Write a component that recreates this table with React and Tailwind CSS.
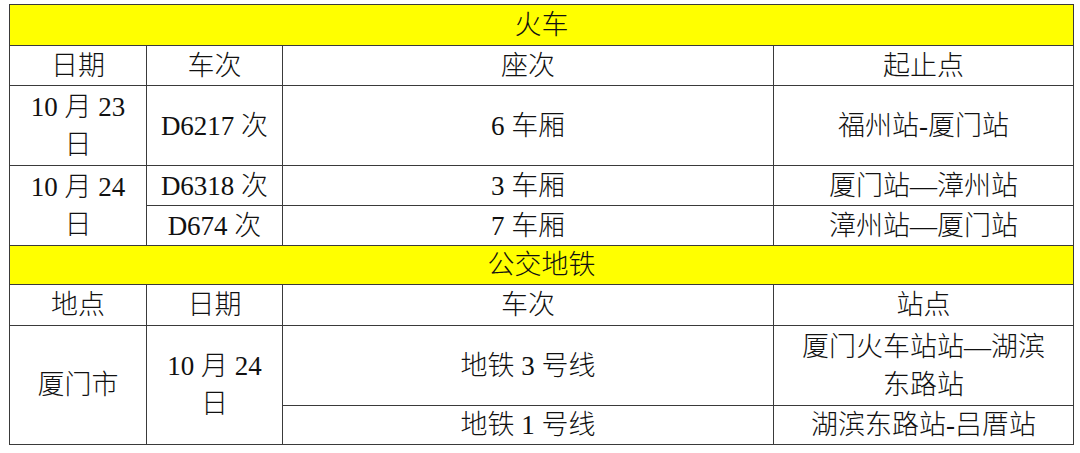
import React from "react";

const font = { fontFamily: '"Liberation Serif", "Noto Sans CJK SC", serif' };

function Td({ children, className = "", ...rest }) {
  return (
    <td
      className={`border border-[#3a3a3a] px-[7px] text-center align-middle leading-[38px] ${className}`}
      {...rest}
    >
      {children}
    </td>
  );
}

export default function App() {
  return (
    <div className="w-[1080px] h-[453px] bg-white pl-[9px] pt-[4px]" style={font}>
      <table className="w-[1064px] table-fixed border-collapse border border-[#7a7a7a] text-[27px] font-light text-[#111]">
        <colgroup>
          <col className="w-[137px]" />
          <col className="w-[136px]" />
          <col className="w-[491px]" />
          <col className="w-[300px]" />
        </colgroup>
        <tbody>
          <tr className="h-[41px]">
            <Td colSpan={4} className="bg-[#ffff00]">火车</Td>
          </tr>
          <tr className="h-[40px]">
            <Td>日期</Td>
            <Td>车次</Td>
            <Td>座次</Td>
            <Td>起止点</Td>
          </tr>
          <tr className="h-[80px]">
            <Td>10 月 23<br />日</Td>
            <Td>D6217 次</Td>
            <Td>6 车厢</Td>
            <Td>福州站-厦门站</Td>
          </tr>
          <tr className="h-[40px]">
            <Td rowSpan={2}>10 月 24<br />日</Td>
            <Td>D6318 次</Td>
            <Td>3 车厢</Td>
            <Td>厦门站—漳州站</Td>
          </tr>
          <tr className="h-[40px]">
            <Td>D674 次</Td>
            <Td>7 车厢</Td>
            <Td>漳州站—厦门站</Td>
          </tr>
          <tr className="h-[39px]">
            <Td colSpan={4} className="bg-[#ffff00]">公交地铁</Td>
          </tr>
          <tr className="h-[41px]">
            <Td>地点</Td>
            <Td>日期</Td>
            <Td>车次</Td>
            <Td>站点</Td>
          </tr>
          <tr className="h-[80px]">
            <Td rowSpan={2}>厦门市</Td>
            <Td rowSpan={2}>10 月 24<br />日</Td>
            <Td>地铁 3 号线</Td>
            <Td>厦门火车站站—湖滨<br />东路站</Td>
          </tr>
          <tr className="h-[39px]">
            <Td>地铁 1 号线</Td>
            <Td>湖滨东路站-吕厝站</Td>
          </tr>
        </tbody>
      </table>
    </div>
  );
}
